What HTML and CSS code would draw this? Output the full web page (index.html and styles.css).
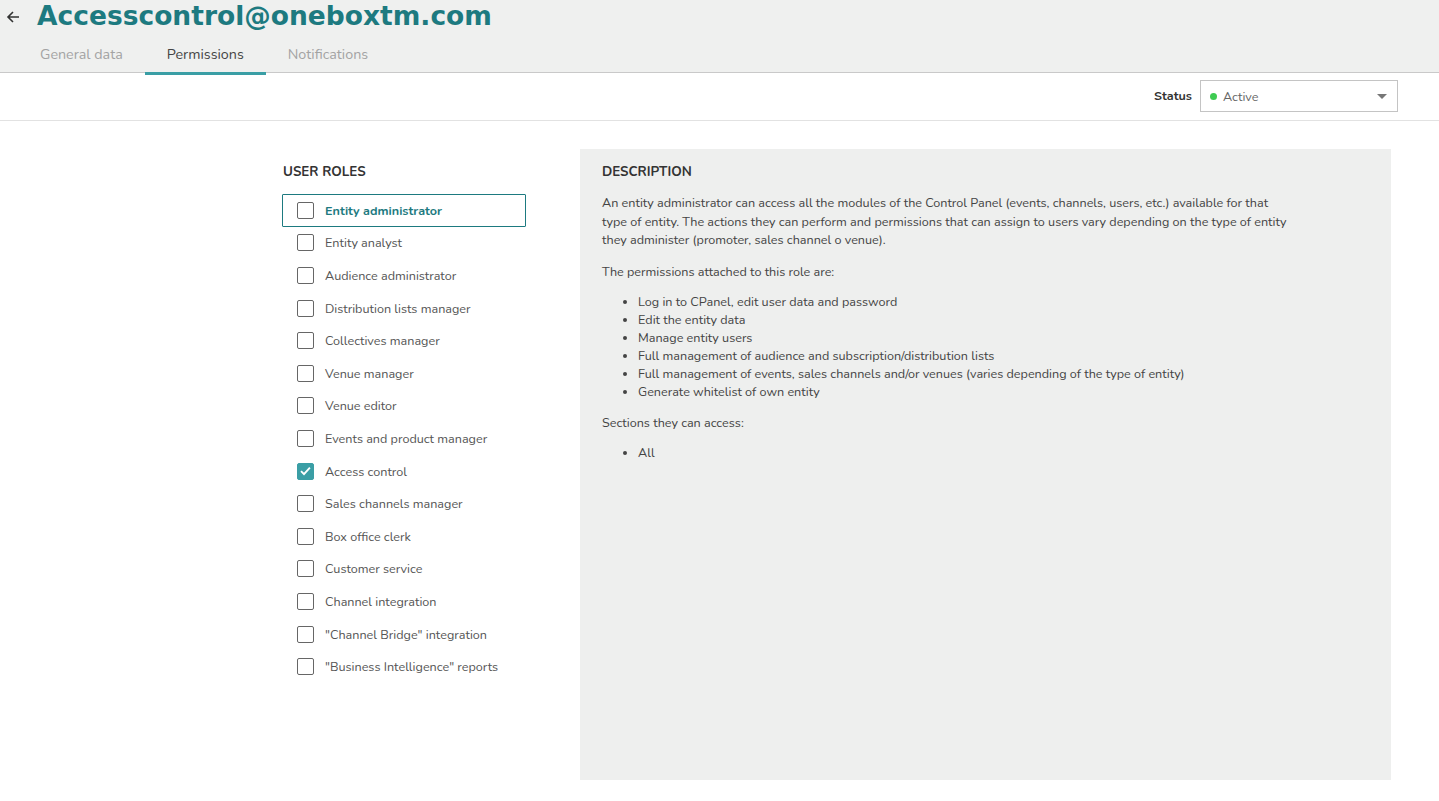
FILE: index.html
```html
<!DOCTYPE html>
<html lang="en">
<head>
<meta charset="utf-8">
<title>Accesscontrol@oneboxtm.com</title>
<link rel="stylesheet" href="styles.css">
</head>
<body>
<header class="page-header">
  <div class="title-row">
    <button class="back" aria-label="Back">
      <svg width="16" height="16" viewBox="0 0 16 16"><path d="M14 8H3M8 3L3 8l5 5" fill="none" stroke="#333" stroke-width="1.6"/></svg>
    </button>
    <h1 class="title">Accesscontrol@oneboxtm.com</h1>
  </div>
  <nav class="tabs">
    <a class="tab">General data</a>
    <a class="tab active">Permissions</a>
    <a class="tab">Notifications</a>
  </nav>
</header>

<div class="status-bar">
  <span class="status-label">Status</span>
  <div class="select">
    <span class="dot"></span>
    <span class="select-value">Active</span>
    <span class="caret"></span>
  </div>
</div>

<main class="content">
  <section class="roles">
    <h2 class="section-title">USER ROLES</h2>
    <ul class="role-list">
      <li class="role selected"><span class="check"></span>Entity administrator</li>
      <li class="role"><span class="check"></span>Entity analyst</li>
      <li class="role"><span class="check"></span>Audience administrator</li>
      <li class="role"><span class="check"></span>Distribution lists manager</li>
      <li class="role"><span class="check"></span>Collectives manager</li>
      <li class="role"><span class="check"></span>Venue manager</li>
      <li class="role"><span class="check"></span>Venue editor</li>
      <li class="role"><span class="check"></span>Events and product manager</li>
      <li class="role"><span class="check checked"><svg width="16" height="16" viewBox="0 0 16 16"><path d="M3.2 8.2l3.2 3.2 6.3-7" fill="none" stroke="#fff" stroke-width="2"/></svg></span>Access control</li>
      <li class="role"><span class="check"></span>Sales channels manager</li>
      <li class="role"><span class="check"></span>Box office clerk</li>
      <li class="role"><span class="check"></span>Customer service</li>
      <li class="role"><span class="check"></span>Channel integration</li>
      <li class="role"><span class="check"></span>"Channel Bridge" integration</li>
      <li class="role"><span class="check"></span>"Business Intelligence" reports</li>
    </ul>
  </section>

  <section class="description">
    <h2 class="section-title">DESCRIPTION</h2>
    <p class="intro">An entity administrator can access all the modules of the Control Panel (events, channels, users, etc.) available for that type of entity. The actions they can perform and permissions that can assign to users vary depending on the type of entity they administer (promoter, sales channel o venue).</p>
    <p>The permissions attached to this role are:</p>
    <ul>
      <li>Log in to CPanel, edit user data and password</li>
      <li>Edit the entity data</li>
      <li>Manage entity users</li>
      <li>Full management of audience and subscription/distribution lists</li>
      <li>Full management of events, sales channels and/or venues (varies depending of the type of entity)</li>
      <li>Generate whitelist of own entity</li>
    </ul>
    <p>Sections they can access:</p>
    <ul>
      <li>All</li>
    </ul>
  </section>
</main>
</body>
</html>
```

FILE: styles.css
```css
* { box-sizing: border-box; }
html, body { margin: 0; padding: 0; }
body {
  font-family: "Nunito", "Lato", "Open Sans", sans-serif;
  font-size: 12.6px;
  color: #444;
  background: #fff;
  width: 1439px;
  height: 801px;
  overflow: hidden;
}

.page-header {
  background: #eff0ef;
  border-bottom: 1px solid #c9c9c9;
  height: 73px;
}
.title-row {
  display: flex;
  align-items: center;
  height: 32px;
  padding-left: 4px;
}
.back {
  border: 0;
  background: none;
  padding: 0;
  width: 18px;
  height: 18px;
  display: flex;
  align-items: center;
  justify-content: center;
  margin-right: 15px;
  margin-top: 1px;
}
.title {
  margin: 0;
  font-family: "DejaVu Sans", sans-serif;
  font-weight: bold;
  font-size: 26.5px;
  color: #1d7a80;
  line-height: 32px;
}
.tabs {
  display: flex;
  padding-left: 18px;
  margin-top: 4px;
}
.tab {
  display: block;
  padding: 9px 22px 8px;
  font-size: 14.3px;
  color: #a3a3a3;
  border-bottom: 3px solid transparent;
  line-height: 19px;
}
.tab.active {
  color: #444;
  border-bottom-color: #3a9ea5;
}

.status-bar {
  display: flex;
  align-items: center;
  justify-content: flex-end;
  height: 48px;
  border-bottom: 1px solid #e2e2e2;
  padding-right: 41px;
}
.status-label {
  font-weight: bold;
  color: #333;
  margin-right: 8px;
  margin-top: -2px;
}
.select {
  width: 198px;
  height: 32px;
  border: 1px solid #c4c4c4;
  background: #fff;
  display: flex;
  align-items: center;
  padding: 0 10px 0 9px;
  margin-top: -1px;
}
.dot {
  width: 7px;
  height: 7px;
  border-radius: 50%;
  background: #3ecb52;
  margin-right: 6px;
}
.select-value { color: #666; flex: 1; }
.caret {
  width: 0; height: 0;
  border-left: 5px solid transparent;
  border-right: 5px solid transparent;
  border-top: 5px solid #777;
}

.content {
  display: flex;
  padding: 28px 48px 0 282px;
}
.roles {
  width: 298px;
  flex: none;
  padding-top: 15px;
}
.section-title {
  margin: 0;
  font-size: 13.4px;
  font-weight: bold;
  color: #333;
  line-height: 16px;
  padding-left: 1px;
}
.role-list {
  list-style: none;
  margin: 14px 0 0;
  padding: 0;
  width: 244px;
}
.role {
  display: flex;
  align-items: center;
  height: 32.6px;
  padding-left: 14px;
  border: 1px solid transparent;
  color: #555;
}
.role.selected {
  border-color: #1d7a80;
  color: #1d7a80;
  font-weight: bold;
  border-radius: 1px;
}
.check {
  width: 17px;
  height: 17px;
  border: 1px solid #666;
  border-radius: 2px;
  margin-right: 11px;
  flex: none;
  display: flex;
  align-items: center;
  justify-content: center;
}
.check.checked {
  background: #3a9ea5;
  border-color: #3a9ea5;
}
.check svg { display: block; }

.description {
  flex: 1;
  background: #eeefee;
  height: 631px;
  padding: 15px 22px;
  color: #444;
}
.description .section-title { padding-left: 0; }
.description p {
  margin: 13px 0 0;
  line-height: 18.5px;
  max-width: 690px;
}
.description p.intro { margin-top: 14px; }
.description ul {
  margin: 11.5px 0 0;
  padding-left: 36px;
  line-height: 18px;
}
```
